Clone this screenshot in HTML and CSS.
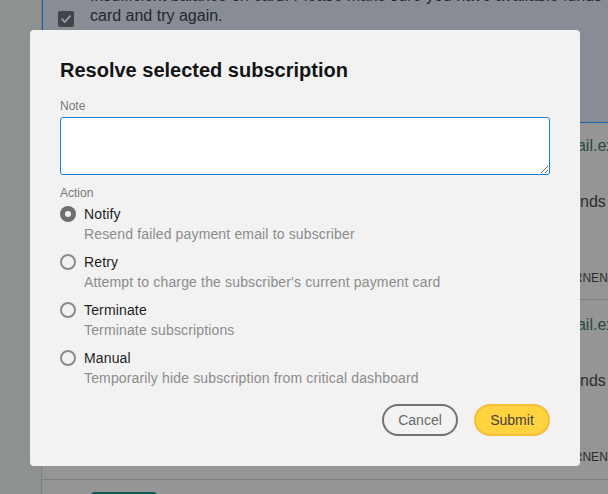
FILE: index.html
```html
<!DOCTYPE html>
<html lang="en">
<head>
<meta charset="utf-8">
<title>Resolve selected subscription</title>
<link rel="stylesheet" href="styles.css">
</head>
<body>
<div class="page">
  <aside class="sidebar"></aside>
  <main class="main">
    <section class="alert-row">
      <span class="checkbox">
        <svg viewBox="0 0 16 16" width="16" height="16"><path d="M4 8.2 L6.8 11 L12 5.2" fill="none" stroke="#9c9ea0" stroke-width="1.8" stroke-linecap="round" stroke-linejoin="round"/></svg>
      </span>
      <p class="alert-text">Insufficient balance on card. Please make sure you have available funds on your card and try again.</p>
    </section>
    <section class="sub-row first">
      <div class="sub-col">
        <div class="sub-email">ann.lee@gmail.example.com</div>
        <div class="sub-reason">Insufficient funds card declined</div>
        <div class="sub-tag">CUSTOMER KERNEN</div>
      </div>
    </section>
    <section class="sub-row">
      <div class="sub-col">
        <div class="sub-email">ann.lee@gmail.example.com</div>
        <div class="sub-reason">Insufficient funds card declined</div>
        <div class="sub-tag">CUSTOMER KERNEN</div>
      </div>
    </section>
    <section class="sub-row last">
      <button class="teal-btn">Resolve</button>
    </section>
  </main>
</div>

<div class="overlay">
  <div class="modal" role="dialog" aria-labelledby="modal-title">
    <h2 id="modal-title" class="modal-title">Resolve selected subscription</h2>
    <label class="field-label" for="note">Note</label>
    <textarea id="note" class="note"></textarea>
    <div class="field-label action-label">Action</div>
    <div class="options">
      <label class="option">
        <span class="radio checked"></span>
        <span class="option-text">
          <span class="option-title">Notify</span>
          <span class="option-desc">Resend failed payment email to subscriber</span>
        </span>
      </label>
      <label class="option">
        <span class="radio"></span>
        <span class="option-text">
          <span class="option-title">Retry</span>
          <span class="option-desc">Attempt to charge the subscriber's current payment card</span>
        </span>
      </label>
      <label class="option">
        <span class="radio"></span>
        <span class="option-text">
          <span class="option-title">Terminate</span>
          <span class="option-desc">Terminate subscriptions</span>
        </span>
      </label>
      <label class="option">
        <span class="radio"></span>
        <span class="option-text">
          <span class="option-title">Manual</span>
          <span class="option-desc">Temporarily hide subscription from critical dashboard</span>
        </span>
      </label>
    </div>
    <div class="actions">
      <button class="btn btn-cancel">Cancel</button>
      <button class="btn btn-submit">Submit</button>
    </div>
  </div>
</div>
</body>
</html>
```

FILE: styles.css
```css
* { box-sizing: border-box; }
html, body { margin: 0; padding: 0; }
body {
  width: 608px;
  height: 494px;
  overflow: hidden;
  font-family: "Liberation Sans", Arial, sans-serif;
  background: #959595;
}

/* background page (dimmed) */
.page {
  display: flex;
  height: 494px;
  overflow: hidden;
}
.sidebar {
  width: 42px;
  flex: none;
  background: #8d9190;
  border-right: 1px solid #7c807f;
}
.main {
  flex: 1;
  display: flex;
  flex-direction: column;
  min-width: 0;
  overflow: hidden;
}
.alert-row {
  height: 123px;
  flex: none;
  background: #888d95;
  border-left: 2px solid #1e63ae;
  margin-left: -1px;
  border-bottom: 1px solid #1e63ae;
  display: flex;
  align-items: flex-start;
  gap: 15px;
  padding: 11px 0 0 15px;
}
.checkbox {
  width: 16px;
  height: 16px;
  flex: none;
  border-radius: 2px;
  background: #404347;
  display: flex;
}
.alert-text {
  margin: -25px 0 0 1px;
  font-size: 16px;
  line-height: 20px;
  color: #24272b;
  width: 600px;
  flex: none;
}
.sub-row {
  height: 180px;
  flex: none;
  border-bottom: 1px solid #7f7f7f;
  padding: 15px 0 0 444px;
}
.sub-row.first {
  height: 177px;
  padding-top: 13px;
}
.sub-col {
  display: flex;
  flex-direction: column;
  white-space: nowrap;
}
.sub-email {
  font-size: 16px;
  line-height: 20px;
  color: #2a4947;
}
.sub-reason {
  margin-top: 36px;
  font-size: 16px;
  line-height: 20px;
  color: #2e2e2e;
}
.sub-tag {
  margin-top: 58px;
  font-size: 12px;
  line-height: 16px;
  color: #2e2e2e;
}
.sub-row.last {
  border-bottom: none;
  padding: 12px 0 0 49px;
}
.teal-btn {
  width: 66px;
  height: 34px;
  border: none;
  border-radius: 4px;
  background: #0f5a55;
  color: #cfd8d7;
  font: 14px "Liberation Sans", Arial, sans-serif;
}

/* modal */
.overlay {
  position: fixed;
  inset: 0;
  padding: 30px 0 0 30px;
}
.modal {
  width: 550px;
  height: 436px;
  background: #f2f2f2;
  border-radius: 4px;
  padding: 28px 30px 30px;
  display: flex;
  flex-direction: column;
}
.modal-title {
  margin: 0;
  font-size: 20px;
  line-height: 24px;
  font-weight: bold;
  color: #141414;
}
.field-label {
  display: block;
  margin-top: 16px;
  font-size: 12px;
  line-height: 16px;
  color: #777;
}
.note {
  display: block;
  margin-top: 3px;
  width: 490px;
  height: 58px;
  border: 1px solid #1a80d8;
  border-radius: 3px;
  background: #fff;
  resize: vertical;
  font: 14px "Liberation Sans", Arial, sans-serif;
  outline: none;
}
.action-label {
  margin-top: 10px;
}
.options {
  display: flex;
  flex-direction: column;
  gap: 8px;
  margin-top: 3px;
}
.option {
  display: flex;
  align-items: flex-start;
  gap: 8px;
}
.radio {
  width: 16px;
  height: 16px;
  flex: none;
  margin-top: 2px;
  border-radius: 50%;
  border: 2px solid #8a8a8a;
}
.radio.checked {
  border: none;
  background: #6f6f6f;
  display: flex;
  align-items: center;
  justify-content: center;
}
.radio.checked::after {
  content: "";
  width: 6px;
  height: 6px;
  border-radius: 50%;
  background: #f2f2f2;
}
.option-text {
  display: flex;
  flex-direction: column;
  letter-spacing: 0.15px;
}
.option-title {
  font-size: 14px;
  line-height: 20px;
  color: #1e1e1e;
}
.option-desc {
  font-size: 14px;
  line-height: 20px;
  color: #8c8c8c;
}
.actions {
  margin-top: 16px;
  display: flex;
  justify-content: flex-end;
  gap: 16px;
}
.btn {
  width: 76px;
  height: 32px;
  border-radius: 16px;
  font: 14px "Liberation Sans", Arial, sans-serif;
  padding: 0;
}
.btn-cancel {
  background: transparent;
  border: 2px solid #727272;
  color: #6a6a6a;
}
.btn-submit {
  background: #ffd23f;
  border: 2px solid #f6bd36;
  color: #3f3f3f;
}
```
